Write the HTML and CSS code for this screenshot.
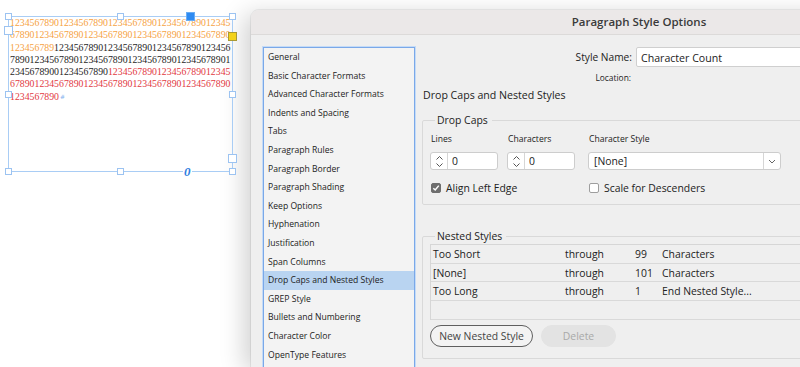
FILE: index.html
```html
<!DOCTYPE html>
<html>
<head>
<meta charset="utf-8">
<link rel="stylesheet" href="styles.css">
</head>
<body>
<div class="canvas">
  <div class="frame">
    <div class="story">
      <div class="ln"><span class="c-or">123456789012345678901234567890123456789012345</span></div>
      <div class="ln"><span class="c-or">678901234567890123456789012345678901234567890</span></div>
      <div class="ln"><span class="c-or">123456789</span><span class="c-bk">123456789012345678901234567890123456</span></div>
      <div class="ln"><span class="c-bk">789012345678901234567890123456789012345678901</span></div>
      <div class="ln"><span class="c-bk">23456789001234567890</span><span class="c-rd">1234567890123456789012345</span></div>
      <div class="ln"><span class="c-rd">678901234567890123456789012345678901234567890</span></div>
      <div class="ln"><span class="c-rd">1234567890</span><span class="eos">#</span></div>
    </div>
    <span class="h h-tl"></span>
    <span class="h h-tm"></span>
    <span class="h h-tr"></span>
    <span class="h h-ml"></span>
    <span class="h h-mr"></span>
    <span class="h h-bl"></span>
    <span class="h h-bm"></span>
    <span class="h h-br"></span>
    <span class="inport"></span>
    <span class="outport"></span>
    <span class="bluehandle"></span>
    <span class="corner"></span>
    <span class="zero">0</span>
  </div>
</div>

<div class="dialog">
  <div class="titlebar">Paragraph Style Options</div>
  <div class="main">
    <ul class="sidebar">
      <li>General</li>
      <li>Basic Character Formats</li>
      <li>Advanced Character Formats</li>
      <li>Indents and Spacing</li>
      <li>Tabs</li>
      <li>Paragraph Rules</li>
      <li>Paragraph Border</li>
      <li>Paragraph Shading</li>
      <li>Keep Options</li>
      <li>Hyphenation</li>
      <li>Justification</li>
      <li>Span Columns</li>
      <li class="sel">Drop Caps and Nested Styles</li>
      <li>GREP Style</li>
      <li>Bullets and Numbering</li>
      <li>Character Color</li>
      <li>OpenType Features</li>
    </ul>
    <div class="pane">
      <div class="namegrid">
        <div class="lbl">Style Name:</div>
        <div class="textfield">Character Count</div>
        <div class="lbl small">Location:</div>
        <div></div>
      </div>
      <div class="heading">Drop Caps and Nested Styles</div>

      <fieldset class="group dropcaps">
        <legend>Drop Caps</legend>
        <div class="dcgrid">
          <div class="fl">Lines</div>
          <div class="fl">Characters</div>
          <div class="fl shift">Character Style</div>
          <div class="spin">
            <span class="stepper"><svg width="9" height="13" viewBox="0 0 9 13"><path d="M1.5 4.5 L4.5 1.5 L7.5 4.5 M1.5 8.5 L4.5 11.5 L7.5 8.5" fill="none" stroke="#555" stroke-width="1"/></svg></span>
            <span class="val">0</span>
          </div>
          <div class="spin">
            <span class="stepper"><svg width="9" height="13" viewBox="0 0 9 13"><path d="M1.5 4.5 L4.5 1.5 L7.5 4.5 M1.5 8.5 L4.5 11.5 L7.5 8.5" fill="none" stroke="#555" stroke-width="1"/></svg></span>
            <span class="val">0</span>
          </div>
          <div class="select shift">
            <span class="val">[None]</span>
            <span class="selbtn"><svg width="8" height="5" viewBox="0 0 8 5"><path d="M1 1 L4 4 L7 1" fill="none" stroke="#666" stroke-width="1"/></svg></span>
          </div>
        </div>
        <div class="checks">
          <label class="chk"><span class="box on"><svg width="8" height="8" viewBox="0 0 8 8"><path d="M1.3 4.2 L3.2 6 L6.8 1.6" fill="none" stroke="#fff" stroke-width="1.5"/></svg></span>Align Left Edge</label>
          <label class="chk"><span class="box"></span>Scale for Descenders</label>
        </div>
      </fieldset>

      <fieldset class="group nested">
        <legend>Nested Styles</legend>
        <div class="table">
          <div class="row"><span class="c1">Too Short</span><span class="c2">through</span><span class="c3">99</span><span class="c4">Characters</span></div>
          <div class="row"><span class="c1">[None]</span><span class="c2">through</span><span class="c3">101</span><span class="c4">Characters</span></div>
          <div class="row"><span class="c1">Too Long</span><span class="c2">through</span><span class="c3">1</span><span class="c4">End Nested Style...</span></div>
          <div class="row empty"></div>
        </div>
        <div class="buttons">
          <button class="btn">New Nested Style</button>
          <button class="btn disabled">Delete</button>
        </div>
      </fieldset>
    </div>
  </div>
</div>
</body>
</html>
```

FILE: styles.css
```css
html, body {
  margin: 0;
  padding: 0;
}
body {
  width: 800px;
  height: 367px;
  overflow: hidden;
  background: #ffffff;
  display: flex;
  font-family: "Open Sans", "Noto Sans", sans-serif;
  color: #222;
}

/* ---------- canvas ---------- */
.canvas {
  flex: none;
  width: 251px;
  box-sizing: border-box;
  padding: 16px 0 0 8px;
}
.frame {
  position: relative;
  width: 225px;
  height: 156px;
  box-sizing: border-box;
  border: 1px solid #a9cdf5;
}
.story {
  padding: 0 0 0 1px;
  font-family: "Liberation Serif", serif;
  font-size: 9.8px;
  line-height: 12.25px;
  white-space: nowrap;
}
.c-or { color: #f6a23f; }
.c-bk { color: #1e1e1e; }
.c-rd { color: #e2393f; }
.eos {
  color: #7fb0ee;
  font-family: "DejaVu Sans", sans-serif;
  font-size: 6px;
  vertical-align: 1px;
  margin-left: 1px;
}
.h {
  position: absolute;
  width: 5px;
  height: 5px;
  border: 1px solid #9cc3f1;
  background: #fff;
}
.h-tl { left: -4px; top: -4px; }
.h-tm { left: 108px; top: -4px; }
.h-tr { right: -4px; top: -4px; }
.h-ml { left: -4px; top: 74px; }
.h-mr { right: -4px; top: 74px; }
.h-bl { left: -4px; bottom: -4px; }
.h-bm { left: 108px; bottom: -4px; }
.h-br { right: -4px; bottom: -4px; }
.inport, .outport {
  position: absolute;
  width: 7px;
  height: 7px;
  border: 1px solid #9cc3f1;
  background: #fff;
}
.inport { left: -5px; top: 9px; }
.outport { right: -5px; top: 137px; }
.bluehandle {
  position: absolute;
  left: 177px;
  top: -5px;
  width: 7px;
  height: 7px;
  background: #2f8bf2;
  border: 1px solid #6aaef5;
}
.corner {
  position: absolute;
  right: -5px;
  top: 15px;
  width: 7px;
  height: 7px;
  background: #f3d21a;
  border: 1px solid #a99a33;
}
.zero {
  position: absolute;
  left: 174px;
  bottom: -9px;
  font-family: "Liberation Serif", serif;
  font-style: italic;
  font-weight: bold;
  font-size: 13px;
  line-height: 16px;
  color: #2f7de0;
  background: #fff;
  padding: 0 1px;
}

/* ---------- dialog ---------- */
.dialog {
  flex: none;
  width: 776px;
  margin-top: 10px;
  background: #efefef;
  border-top-left-radius: 8px;
  box-shadow: -7px 4px 24px rgba(0, 0, 0, 0.18), 0 0 0 1px rgba(0,0,0,0.06);
  display: flex;
  flex-direction: column;
}
.titlebar {
  flex: none;
  height: 24px;
  line-height: 24px;
  text-align: center;
  font-weight: 600;
  font-size: 11.5px;
  color: #3a3a3a;
  background: #ebe8e8;
  border-bottom: 1px solid #dcdad9;
  border-top-left-radius: 8px;
}
.main {
  display: flex;
  gap: 7px;
  padding: 12px 0 0 12px;
}
.sidebar {
  flex: none;
  list-style: none;
  margin: 0;
  padding: 0;
  width: 150px;
  height: 340px;
  background: #f3f3f3;
  border: 1px solid #7aa8e8;
  box-shadow: 0 0 0 1px #c4dbf7;
  font-size: 8.6px;
  font-weight: 500;
}
.sidebar li {
  height: 18.6px;
  line-height: 18.6px;
  padding-left: 4px;
  white-space: nowrap;
}
.sidebar li.sel {
  background: #b9d4f1;
}

.pane {
  flex: none;
  width: 600px;
  display: flex;
  flex-direction: column;
}
.namegrid {
  display: grid;
  grid-template-columns: 210px 1fr;
  column-gap: 4px;
  align-items: center;
  font-size: 10.2px;
}
.namegrid .lbl {
  text-align: right;
}
.namegrid .small {
  font-size: 8.4px;
  height: 18px;
  line-height: 18px;
  padding-right: 1px;
  padding-top: 2px;
}
.textfield {
  height: 20px;
  line-height: 20px;
  background: #fff;
  border: 1px solid #cfcfcf;
  border-radius: 2px;
  box-sizing: border-box;
  padding-left: 4px;
  font-size: 10.6px;
}
.heading {
  margin-top: 0;
  padding-left: 1px;
  font-size: 10.6px;
  height: 17px;
  line-height: 17px;
}

.group {
  margin: 0;
  border: 1px solid #d9d9d9;
  border-radius: 2px;
  padding: 0 0 0 7px;
}
.group legend {
  margin-left: 5px;
  padding: 0 4px 0 2px;
  font-size: 10.4px;
  line-height: 14px;
}
.dropcaps {
  margin-top: 9px;
  height: 92px;
  box-sizing: border-box;
}
.dcgrid {
  display: grid;
  grid-template-columns: 68px 68px 197px;
  column-gap: 9px;
  margin-top: 4px;
}
.dcgrid .shift { margin-left: 4px; }
.fl {
  font-size: 8.6px;
  height: 16px;
  line-height: 16px;
  padding-left: 1px;
}
.spin, .select {
  margin-top: 5px;
  height: 18px;
  box-sizing: border-box;
  background: #fff;
  border: 1px solid #cdcdcd;
  border-radius: 3px;
  display: flex;
  align-items: center;
  font-size: 10.4px;
}
.stepper {
  width: 16px;
  height: 100%;
  border-right: 1px solid #d6d6d6;
  display: flex;
  align-items: center;
  justify-content: center;
}
.spin .val { padding-left: 4px; }
.select .val { flex: 1; padding-left: 5px; }
.selbtn {
  width: 16px;
  height: 100%;
  border-left: 1px solid #d6d6d6;
  display: flex;
  align-items: center;
  justify-content: center;
}
.checks {
  display: flex;
  margin-top: 11px;
  font-size: 10.4px;
}
.chk {
  display: flex;
  align-items: center;
  gap: 5px;
  padding-left: 1px;
  width: 158px;
}
.chk + .chk { padding-left: 0; }
.box {
  width: 10px;
  height: 10px;
  box-sizing: border-box;
  border: 1px solid #9e9e9e;
  border-radius: 2px;
  background: #fff;
  display: flex;
  align-items: center;
  justify-content: center;
}
.box.on {
  background: #6e6e6e;
  border-color: #6e6e6e;
}

.nested {
  margin-top: 24px;
  height: 130px;
  box-sizing: border-box;
}
.table {
  margin-top: 1px;
  border-top: 1px solid #d6d6d6;
  border-left: 1px solid #d6d6d6;
  font-size: 10.4px;
}
.row {
  display: flex;
  height: 18.6px;
  line-height: 18px;
  border-bottom: 1px solid #d9d9d9;
  box-sizing: border-box;
}
.row.empty { height: 19px; }
.c1 { width: 132px; padding-left: 2px; }
.c2 { width: 70px; }
.c3 { width: 27px; }
.c4 { flex: 1; }
.buttons {
  display: flex;
  gap: 8px;
  margin-top: 5px;
}
.btn {
  height: 22px;
  border-radius: 11px;
  font-family: "Open Sans", "Noto Sans", sans-serif;
  font-size: 10.4px;
  padding: 0;
  margin: 0;
  color: #444;
}
.btn:first-child {
  width: 103px;
  background: #f3f3f3;
  border: 1px solid #5f5f5f;
}
.btn.disabled {
  width: 75px;
  background: #e3e3e3;
  border: 1px solid #e3e3e3;
  color: #a9a9a9;
}
```
